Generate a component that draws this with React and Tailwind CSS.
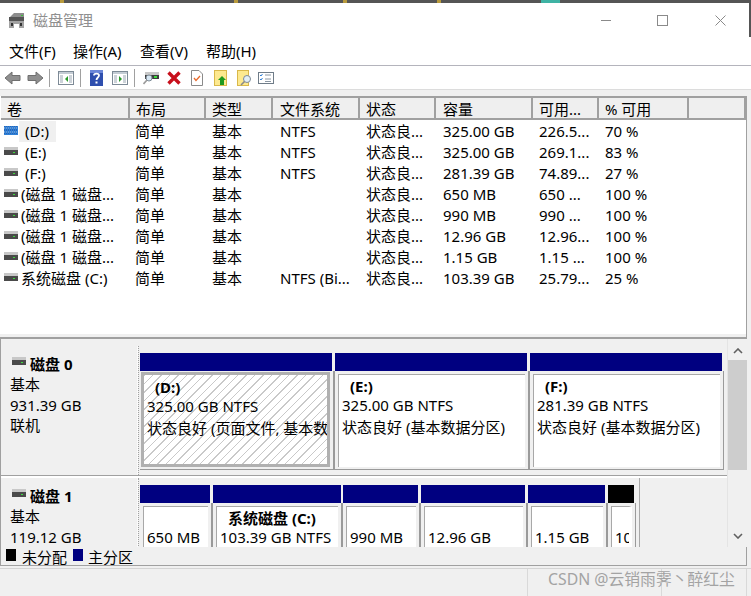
const FONT = "font-['Noto_Sans','Noto_Sans_CJK_SC',sans-serif]";

const COLUMNS = [
  { title: '卷', w: 'w-[129px]', pad: 'pl-[6px]' },
  { title: '布局', w: 'w-[76px]', pad: 'pl-[6px]' },
  { title: '类型', w: 'w-[67px]', pad: 'pl-[6px]' },
  { title: '文件系统', w: 'w-[87px]', pad: 'pl-[7px]' },
  { title: '状态', w: 'w-[76px]', pad: 'pl-[6px]' },
  { title: '容量', w: 'w-[97px]', pad: 'pl-[7px]' },
  { title: '可用...', w: 'w-[66px]', pad: 'pl-[6px]' },
  { title: '% 可用', w: 'w-[90px]', pad: 'pl-[6px]' },
];

const ROWS = [
  { name: '(D:)', nameCls: 'pl-[6px]', fs: 'NTFS', cap: '325.00 GB', free: '226.5...', pct: '70 %', hatched: true },
  { name: '(E:)', nameCls: 'pl-[4px]', fs: 'NTFS', cap: '325.00 GB', free: '269.1...', pct: '83 %' },
  { name: '(F:)', nameCls: 'pl-[4px]', fs: 'NTFS', cap: '281.39 GB', free: '74.89...', pct: '27 %' },
  { name: '(磁盘 1 磁盘...', fs: '', cap: '650 MB', free: '650 ...', pct: '100 %' },
  { name: '(磁盘 1 磁盘...', fs: '', cap: '990 MB', free: '990 ...', pct: '100 %' },
  { name: '(磁盘 1 磁盘...', fs: '', cap: '12.96 GB', free: '12.96...', pct: '100 %' },
  { name: '(磁盘 1 磁盘...', fs: '', cap: '1.15 GB', free: '1.15 ...', pct: '100 %' },
  { name: '系统磁盘 (C:)', fs: 'NTFS (Bi...', cap: '103.39 GB', free: '25.79...', pct: '25 %' },
];

function DriveIcon({ className = '' }) {
  return (
    <svg width="14" height="8" viewBox="0 0 14 8" className={className}>
      <rect x="0" y="0" width="14" height="3" fill="#c8c8c8" />
      <rect x="0" y="3" width="14" height="5" fill="#4a4a4a" />
      <rect x="9" y="5" width="2" height="1" fill="#3ddc3d" />
    </svg>
  );
}

function HatchedDriveIcon() {
  return (
    <svg width="14" height="9" viewBox="0 0 14 9">
      <rect width="14" height="9" fill="#2f7fd6" />
      <path d="M0 1h14M0 3h14M0 5h14M0 7h14" stroke="#1b4f9c" strokeDasharray="1 1" />
      <path d="M0 2h14M0 6h14" stroke="#9cc8f2" strokeDasharray="1 1" />
    </svg>
  );
}

function AppIcon() {
  return (
    <svg width="17" height="17" viewBox="0 0 17 17">
      <path d="M2 5 L6 1 H16 V5 Z" fill="#8d8d8d" />
      <path d="M1 5 H16 V9 H1 Z" fill="#555" />
      <rect x="13" y="3" width="2" height="1" fill="#37c337" />
      <path d="M1 9 H16 V16 H11 V12 H6 V16 H1 Z" fill="#a2a2a2" />
      <rect x="3" y="11" width="2" height="3" fill="#333" />
      <rect x="12" y="11" width="2" height="3" fill="#333" />
    </svg>
  );
}

function Arrow({ flip, className = '' }) {
  return (
    <svg width="17" height="14" viewBox="0 0 17 14" className={className}>
      <path
        d={flip ? 'M1 4.5H9V1L16 7L9 13V9.5H1Z' : 'M16 4.5H8V1L1 7L8 13V9.5H16Z'}
        fill="#8f8f8f"
        stroke="#6f6f6f"
      />
    </svg>
  );
}

function Sep({ className = '' }) {
  return <div className={`w-px h-[18px] bg-[#a0a0a0] ${className}`} />;
}

function PanelIcon({ right, className = '' }) {
  return (
    <svg width="16" height="14" viewBox="0 0 16 14" className={className}>
      <rect x="0.5" y="0.5" width="15" height="13" fill="#fff" stroke="#7d8a96" />
      <rect x="1" y="1" width="14" height="2" fill="#c4ccd4" />
      <path d="M2 5h3M2 7h3M2 9h3M2 11h3M11 5h3M11 7h3M11 9h3M11 11h3" stroke="#9aa6b2" />
      <path d={right ? 'M7 5L10 8L7 11Z' : 'M10 5L7 8L10 11Z'} fill="#2a9a2a" />
    </svg>
  );
}

function HelpIcon({ className = '' }) {
  return (
    <svg width="13" height="16" viewBox="0 0 13 16" className={className}>
      <rect width="13" height="16" fill="#2f4fae" />
      <rect x="0" y="0" width="13" height="3" fill="#6b86d8" />
      <path d="M4 5.5C4 3 9 3 9 5.5C9 7.5 6.5 7.5 6.5 10" fill="none" stroke="#fff" strokeWidth="1.8" />
      <rect x="5.5" y="11.5" width="2" height="2" fill="#fff" />
    </svg>
  );
}

function ConnectIcon({ className = '' }) {
  return (
    <svg width="16" height="15" viewBox="0 0 16 15" className={className}>
      <rect x="2" y="2" width="14" height="3" fill="#c8c8c8" />
      <rect x="2" y="5" width="14" height="4" fill="#3d3d3d" />
      <rect x="11" y="6" width="3" height="2" fill="#3ddc3d" />
      <circle cx="6" cy="8" r="3" fill="#d6e6f2" stroke="#7d8a96" />
      <path d="M4 10L0.5 14" stroke="#9b9b9b" strokeWidth="1.6" />
    </svg>
  );
}

function CrossIcon({ className = '' }) {
  return (
    <svg width="14" height="14" viewBox="0 0 14 14" className={className}>
      <path d="M1.5 1.5L12.5 12.5M12.5 1.5L1.5 12.5" stroke="#c8101c" strokeWidth="3.4" />
    </svg>
  );
}

function CheckDocIcon({ className = '' }) {
  return (
    <svg width="12" height="16" viewBox="0 0 12 16" className={className}>
      <path d="M0.5 0.5H8L11.5 4V15.5H0.5Z" fill="#fff" stroke="#8a8a8a" />
      <path d="M3 8L5 10.5L9 6" fill="none" stroke="#e86a2c" strokeWidth="1.3" />
    </svg>
  );
}

function FolderUpIcon({ className = '' }) {
  return (
    <svg width="13" height="16" viewBox="0 0 13 16" className={className}>
      <rect x="0.5" y="0.5" width="12" height="15" fill="#fde98f" stroke="#d9b84a" />
      <path d="M8 6L12 10H10V15H6V10H4Z" fill="#1f9a1f" />
    </svg>
  );
}

function FolderFindIcon({ className = '' }) {
  return (
    <svg width="15" height="16" viewBox="0 0 15 16" className={className}>
      <rect x="0.5" y="0.5" width="11" height="15" fill="#fde98f" stroke="#d9b84a" />
      <circle cx="10" cy="9" r="3.5" fill="#e2eef6" stroke="#7d8a96" />
      <path d="M7.5 11.5L4 15" stroke="#8a8a8a" strokeWidth="1.6" />
    </svg>
  );
}

function ListIcon({ className = '' }) {
  return (
    <svg width="16" height="12" viewBox="0 0 16 12" className={className}>
      <rect x="0.5" y="0.5" width="15" height="11" fill="#fff" stroke="#6f7c88" />
      <path d="M2 3L3 4L4.5 2M2 7L3 8L4.5 6" fill="none" stroke="#2f7fd6" />
      <path d="M7 3h6M7 7h6M7 9.5h6" stroke="#8a96a2" />
    </svg>
  );
}

function Header() {
  return (
    <div className="flex h-[24px] border-t-2 border-[#a0a0a0] bg-[#efefef] ml-px">
      {COLUMNS.map((c, i) => (
        <div
          key={i}
          className={`${c.w} ${c.pad} shrink-0 h-[22px] leading-[22px] border-r-2 border-b-2 border-[#a0a0a0] text-[15px]`}
        >
          {c.title}
        </div>
      ))}
      <div className="flex-1 h-[22px] border-b-2 border-r-2 border-[#a0a0a0]" />
    </div>
  );
}

function Row({ row }) {
  return (
    <div className="flex h-[21.05px] leading-[21px] text-[15px] whitespace-nowrap">
      <div className="w-[129px] flex items-center shrink-0 pl-1">
        <div className="w-[17px] shrink-0 flex mb-[3px]">{row.hatched ? <HatchedDriveIcon /> : <DriveIcon />}</div>
        <span className={`${row.nameCls || ''} ${row.hatched ? 'bg-[#f0f0f0] pr-[7px] w-[37px] ml-[-2px]' : ''}`}>{row.name}</span>
      </div>
      <div className="w-[77px] pl-[6px] shrink-0">简单</div>
      <div className="w-[67px] pl-[6px] shrink-0">基本</div>
      <div className="w-[87px] pl-[7px] shrink-0">{row.fs}</div>
      <div className="w-[76px] pl-[6px] shrink-0">状态良...</div>
      <div className="w-[97px] pl-[7px] shrink-0">{row.cap}</div>
      <div className="w-[66px] pl-[6px] shrink-0">{row.free}</div>
      <div className="pl-[6px]">{row.pct}</div>
    </div>
  );
}

function Partition({ w, barW, color = 'bg-[#000080]', selected, hatched, last, clip, title, lines = [] }) {
  return (
    <div className={`${w} shrink-0 flex flex-col`}>
      <div className={`${barW} h-[18px] shrink-0 ${color}`} />
      <div className={`flex-1 min-h-0 ${last ? 'border-r' : 'border-r-2'} border-b border-[#9a9a9a] bg-[#f0f0f0] pt-[3px] pl-[3px] pr-[3px] pb-[2px] flex`}>
        <div
          className={`flex-1 min-w-0 overflow-hidden whitespace-nowrap leading-[21px] text-[15px] ${
            selected
              ? 'border-[3px] border-[#b0b0b0] -mt-[2px] -ml-[2px] pt-[1px] pl-[3px]'
              : 'border-t border-l border-[#a8a8a8] pl-[3px] bg-white'
          } ${clip ? 'border-r-[3px] border-r-white' : ''} ${
            hatched ? 'bg-[repeating-linear-gradient(135deg,#c9c9c9_0,#c9c9c9_1px,#ffffff_1px,#ffffff_6px)]' : ''
          }`}
        >
          <div className="h-[20px] pt-[1px] pl-[8px] font-bold">{title}</div>
          {lines.map((l, i) => (
            <div key={i} className="h-[22px]">{l}</div>
          ))}
        </div>
      </div>
    </div>
  );
}

function DiskLabel({ name, lines }) {
  return (
    <div className="w-[137px] shrink-0 bg-[#f0f0f0] border-r border-[#fafafa] pl-[9px] pt-[8px] leading-[20.5px] text-[15px]">
      <div className="flex items-center h-[20px] font-bold">
        <DriveIcon className="ml-[2px] mr-[4px] mb-[6px]" />
        <span>{name}</span>
      </div>
      {lines.map((l, i) => (
        <div key={i}>{l}</div>
      ))}
    </div>
  );
}

function DiskPanes() {
  return (
    <div className="flex-1 min-w-0 overflow-hidden flex flex-col border-l border-[#a0a0a0]">
      <div className="h-[7px] shrink-0" />
      {/* 磁盘 0 */}
      <div className="flex h-[130px] shrink-0 border-b border-[#a0a0a0]">
        <DiskLabel name="磁盘 0" lines={['基本', '931.39 GB', '联机']} />
        <div className="w-[2px] shrink-0 border-l border-dotted border-[#a0a0a0]" />
        <div className="flex pt-[7px] pb-[5px]">
          <Partition w="w-[195px]" barW="w-[192px]" selected hatched title="(D:)" lines={['325.00 GB NTFS', '状态良好 (页面文件, 基本数据分区)']} />
          <Partition w="w-[195px]" barW="w-[192px]" title="(E:)" lines={['325.00 GB NTFS', '状态良好 (基本数据分区)']} />
          <Partition w="w-[194px]" barW="w-[192px]" last title="(F:)" lines={['281.39 GB NTFS', '状态良好 (基本数据分区)']} />
        </div>
      </div>
      <div className="h-[2px] shrink-0 bg-white" />
      {/* 磁盘 1 */}
      <div className="flex h-[130px] shrink-0">
        <DiskLabel name="磁盘 1" lines={['基本', '119.12 GB', '联机']} />
        <div className="w-[2px] shrink-0 border-l border-dotted border-[#a0a0a0]" />
        <div className="flex pt-[7px] pb-[5px] pr-[3px] border-r border-[#a8a8a8]">
          <Partition w="w-[73px]" barW="w-[70px]" title="" lines={['650 MB']} />
          <Partition w="w-[130px]" barW="w-[128px]" title="系统磁盘  (C:)" lines={['103.39 GB NTFS']} />
          <Partition w="w-[78px]" barW="w-[75px]" title="" lines={['990 MB']} />
          <Partition w="w-[107px]" barW="w-[104px]" title="" lines={['12.96 GB']} />
          <Partition w="w-[80px]" barW="w-[77px]" title="" lines={['1.15 GB']} />
          <Partition w="w-[28px]" barW="w-[26px]" color="bg-black" last clip title="" lines={['100 MB']} />
        </div>
      </div>
    </div>
  );
}

function Scrollbar() {
  return (
    <div className="w-[20px] shrink-0 flex flex-col items-center bg-[#f0f0f0] border-l border-[#e4e4e4]">
      <svg width="10" height="6" viewBox="0 0 10 6" className="mt-[9px] mb-[6px]">
        <path d="M1 5L5 1L9 5" fill="none" stroke="#606060" strokeWidth="1.6" />
      </svg>
      <div className="w-full h-[110px] bg-[#cdcdcd]" />
      <svg width="10" height="6" viewBox="0 0 10 6" className="mt-[63px]">
        <path d="M1 1L5 5L9 1" fill="none" stroke="#606060" strokeWidth="1.6" />
      </svg>
    </div>
  );
}

export default function App() {
  return (
    <div className={`${FONT} w-[751px] h-[596px] overflow-hidden bg-[#f0f0f0] text-black flex flex-col`}>
      {/* desktop peeking out above the window */}
      <div className="h-[3px] shrink-0 bg-[#555] flex">
        <div className="w-[4px] ml-[60px] bg-[#b89a3c]" />
        <div className="w-[4px] ml-[170px] bg-[#b89a3c]" />
        <div className="w-[4px] ml-[105px] bg-[#b89a3c]" />
        <div className="w-[4px] ml-[90px] bg-[#b89a3c]" />
        <div className="w-[19px] ml-[100px] bg-[#3fb3a4]" />
      </div>

      {/* title bar */}
      <div className="h-[34px] shrink-0 bg-white flex items-center pl-[8px] border-r-2 border-[#555]">
        <AppIcon />
        <span className="ml-[8px] text-[15px] text-[#8f8f8f]">磁盘管理</span>
        <div className="ml-auto flex items-center">
          <div className="w-[10px] h-px bg-[#8a8a8a]" />
          <div className="w-[11px] h-[11px] ml-[46px] border border-[#8a8a8a]" />
          <svg width="11" height="11" viewBox="0 0 11 11" className="ml-[47px] mr-[23px]">
            <path d="M0.5 0.5L10.5 10.5M10.5 0.5L0.5 10.5" stroke="#8a8a8a" />
          </svg>
        </div>
      </div>

      {/* menu bar */}
      <div className="h-[29px] shrink-0 bg-white border-b border-[#b4b4bc] flex items-center pl-[9px] text-[15px] whitespace-nowrap">
        <span className="w-[64px]">文件(F)</span>
        <span className="w-[67px]">操作(A)</span>
        <span className="w-[66px]">查看(V)</span>
        <span>帮助(H)</span>
      </div>

      {/* toolbar */}
      <div className="h-[23px] shrink-0 bg-white flex items-center">
        <Arrow className="ml-[4px]" />
        <Arrow flip className="ml-[6px]" />
        <Sep className="ml-[5px]" />
        <PanelIcon className="ml-[8px]" />
        <Sep className="ml-[6px]" />
        <HelpIcon className="ml-[9px]" />
        <PanelIcon right className="ml-[9px]" />
        <Sep className="ml-[6px]" />
        <ConnectIcon className="ml-[8px]" />
        <CrossIcon className="ml-[8px]" />
        <CheckDocIcon className="ml-[10px]" />
        <FolderUpIcon className="ml-[11px]" />
        <FolderFindIcon className="ml-[10px]" />
        <ListIcon className="ml-[6px]" />
      </div>
      <div className="h-[7px] shrink-0 bg-[#f0f0f0] border-t border-[#dcdcdc]" />

      {/* volume list */}
      <div className="h-[243px] shrink-0 w-[747px] bg-white flex flex-col border-r border-[#a0a0a0]">
        <Header />
        <div className="flex-1 pt-px">
          {ROWS.map((r, i) => (
            <Row key={i} row={r} />
          ))}
        </div>
        <div className="h-[3px] bg-[#f0f0f0]" />
        <div className="h-[2px] bg-[#a0a0a0]" />
      </div>

      {/* graphical disk view */}
      <div className="h-[208px] shrink-0 w-[747px] flex overflow-hidden">
        <DiskPanes />
        <Scrollbar />
      </div>

      {/* legend */}
      <div className="h-[19px] shrink-0 w-[747px] bg-[#f0f0f0] border-l border-r border-b border-[#a0a0a0] flex items-center pl-[5px] text-[15px]">
        <div className="w-[10px] h-[12px] bg-black mb-[3px]" />
        <span className="ml-[6px] self-end leading-[15px]">未分配</span>
        <div className="w-[10px] h-[12px] bg-[#000080] ml-[6px] mb-[3px]" />
        <span className="ml-[5px] self-end leading-[15px]">主分区</span>
      </div>

      {/* status bar */}
      <div className="flex-1 flex mt-[2px] border-t border-[#d4d4d4] relative">
        <div className="w-[528px] border-r border-[#d9d9d9]" />
        <div className="w-[134px] border-r border-[#d9d9d9]" />
        <div className="w-[85px] border-r border-[#d9d9d9]" />
        <span className="absolute left-[548px] top-0 text-[15.8px] leading-[20px] text-[#a3a3a3] whitespace-nowrap">
          CSDN @云销雨霁丶醉红尘
        </span>
      </div>
    </div>
  );
}
